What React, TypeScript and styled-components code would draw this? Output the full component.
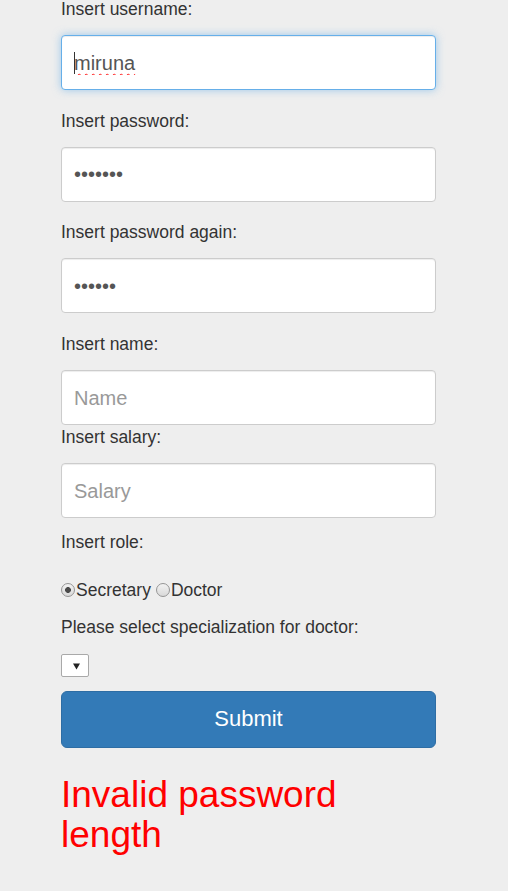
import React from "react";
import styled, { createGlobalStyle } from "styled-components";

const GlobalStyle = createGlobalStyle`
  html, body {
    margin: 0;
    padding: 0;
    background: #eeeeee;
  }
  body {
    font-family: "Liberation Sans", Arial, Helvetica, sans-serif;
    color: #333333;
    overflow: hidden;
  }
  *, *::before, *::after {
    box-sizing: border-box;
  }
`;

const Page = styled.div`
  min-height: 891px;
  padding-left: 61px;
`;

const Form = styled.form`
  width: 375px;
  margin-top: -3px;
  display: flex;
  flex-direction: column;
`;

const Group = styled.div<{ $mb: number }>`
  display: flex;
  flex-direction: column;
  align-items: flex-start;
  margin-bottom: ${(p) => p.$mb}px;
`;

const Label = styled.label<{ $mb?: number }>`
  display: block;
  font-size: 17.5px;
  line-height: 25px;
  color: #333333;
  margin-bottom: ${(p) => (p.$mb ?? 13)}px;
`;

const InputWrap = styled.div`
  position: relative;
  width: 100%;
`;

const TextInput = styled.input<{ $focused?: boolean; $misspelled?: boolean }>`
  display: block;
  width: 100%;
  height: 55px;
  margin: 0;
  padding: 1px 12px 0;
  font-family: inherit;
  font-size: 20px;
  color: #555555;
  background: #ffffff;
  border: 1px solid ${(p) => (p.$focused ? "#66afe9" : "#cccccc")};
  border-radius: 4px;
  outline: none;
  box-shadow: inset 0 1px 1px rgba(0, 0, 0, 0.075)
    ${(p) => (p.$focused ? ", 0 0 8px rgba(102, 175, 233, 0.6)" : "")};
  caret-color: transparent;
  text-decoration-line: ${(p) => (p.$misspelled ? "underline" : "none")};
  text-decoration-style: wavy;
  text-decoration-color: #ff1a1a;
  text-decoration-thickness: 1px;
  text-underline-offset: 3px;

  &::placeholder {
    color: #999999;
    opacity: 1;
  }
`;

const Caret = styled.span`
  position: absolute;
  left: 13px;
  top: 17px;
  width: 1px;
  height: 22px;
  background: #333333;
  pointer-events: none;
`;

const RadioRow = styled.div`
  display: flex;
  align-items: center;
  gap: 5px;
  height: 25px;
  font-size: 17.5px;
  color: #333333;
  margin-bottom: 12.5px;
`;

const RadioLabel = styled.label`
  display: inline-flex;
  align-items: center;
`;

const Radio = styled.input`
  appearance: none;
  -webkit-appearance: none;
  width: 14px;
  height: 14px;
  margin: 0 1px 0 0;
  border-radius: 50%;
  border: 1px solid #959595;
  background: linear-gradient(#f2f2f2, #d9d9d9);

  &:checked {
    background: radial-gradient(circle at center, #4a4a4a 0 2.6px, transparent 3.2px),
      linear-gradient(#f2f2f2, #d9d9d9);
  }
`;

const SelectWrap = styled.span`
  position: relative;
  display: inline-block;
  width: 28px;
  height: 23px;
  margin-bottom: 14px;
`;

const Select = styled.select`
  appearance: none;
  -webkit-appearance: none;
  display: block;
  width: 28px;
  height: 23px;
  margin: 0;
  padding: 0;
  background: #ffffff;
  border: 1px solid #a9a9a9;
  border-radius: 2px;
  outline: none;
`;

const Arrow = styled.svg`
  position: absolute;
  left: 12px;
  top: 9px;
  width: 7px;
  height: 7px;
  pointer-events: none;
`;

const SubmitButton = styled.button`
  display: block;
  width: 100%;
  height: 57px;
  margin: 0;
  padding: 0;
  font-family: inherit;
  font-size: 22px;
  color: #ffffff;
  background: #337ab7;
  border: 1px solid #2e6da4;
  border-radius: 6px;
  cursor: pointer;
`;

const ErrorHeading = styled.h1`
  margin: 27px 0 0;
  max-width: 345px;
  font-size: 37px;
  line-height: 40.5px;
  font-weight: normal;
  color: #ff0000;
`;

export default function App() {
  return (
    <>
      <GlobalStyle />
      <Page>
        <Form onSubmit={(e) => e.preventDefault()}>
          <Group $mb={18.7}>
            <Label htmlFor="username">Insert username:</Label>
            <InputWrap>
              <TextInput
                id="username"
                type="text"
                defaultValue="miruna"
                $focused
                $misspelled
                spellCheck={false}
              />
              <Caret />
            </InputWrap>
          </Group>

          <Group $mb={18.7}>
            <Label htmlFor="password">Insert password:</Label>
            <TextInput id="password" type="password" defaultValue="1234567" />
          </Group>

          <Group $mb={18.7}>
            <Label htmlFor="password2">Insert password again:</Label>
            <TextInput id="password2" type="password" defaultValue="123456" />
          </Group>

          <Group $mb={0}>
            <Label htmlFor="name">Insert name:</Label>
            <TextInput id="name" type="text" placeholder="Name" />
          </Group>

          <Group $mb={12.4}>
            <Label htmlFor="salary">Insert salary:</Label>
            <TextInput id="salary" type="text" placeholder="Salary" />
          </Group>

          <Group $mb={0}>
            <Label $mb={22.5}>Insert role:</Label>
            <RadioRow>
              <RadioLabel>
                <Radio type="radio" name="role" value="secretary" defaultChecked />
                Secretary
              </RadioLabel>
              <RadioLabel>
                <Radio type="radio" name="role" value="doctor" />
                Doctor
              </RadioLabel>
            </RadioRow>
          </Group>

          <Group $mb={0}>
            <Label htmlFor="spec" $mb={13.5}>
              Please select specialization for doctor:
            </Label>
            <SelectWrap>
              <Select id="spec" />
              <Arrow viewBox="0 0 7 7">
                <polygon points="0,0.5 7,0.5 3.5,6.5" fill="#222222" />
              </Arrow>
            </SelectWrap>
          </Group>

          <SubmitButton type="submit">Submit</SubmitButton>

          <ErrorHeading>Invalid password length</ErrorHeading>
        </Form>
      </Page>
    </>
  );
}
